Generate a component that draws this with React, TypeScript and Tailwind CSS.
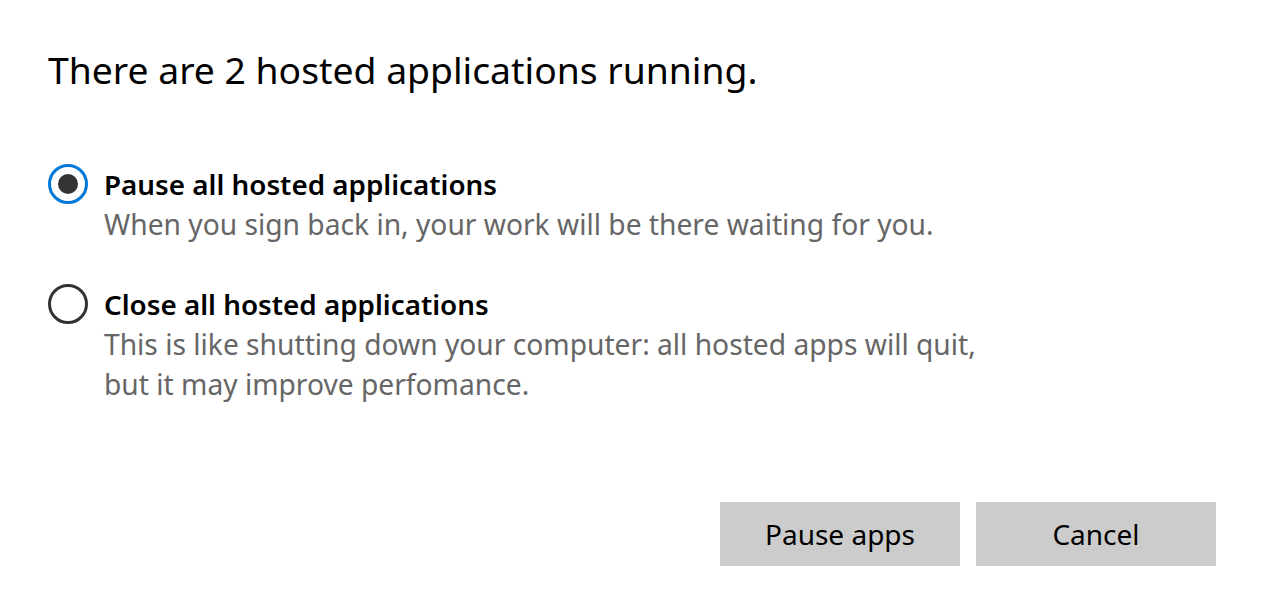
import React from "react";

export default function App() {
  return (
    <div
      className="w-[1264px] h-[614px] bg-white flex flex-col text-black"
      style={{ fontFamily: '"Noto Sans", "Open Sans", sans-serif' }}
    >
      <div className="pl-[48px] pt-[48px]">
        <h1 className="text-[37.3px] leading-[44px] font-normal">There are 2 hosted applications running.</h1>
      </div>
      <div className="pl-[48px] pt-[72px] flex flex-col gap-[40px]">
        <div className="flex items-start gap-[16px]">
          <div className="w-[40px] h-[40px] rounded-full border-[3px] border-[#0078d7] flex items-center justify-center">
            <div className="w-[20px] h-[20px] rounded-full bg-[#333333]" />
          </div>
          <div className="flex flex-col">
            <div className="text-[27.8px] leading-[40px] font-semibold">Pause all hosted applications</div>
            <div className="text-[28.2px] leading-[40px] text-[#666666]">When you sign back in, your work will be there waiting for you.</div>
          </div>
        </div>
        <div className="flex items-start gap-[16px]">
          <div className="w-[40px] h-[40px] rounded-full border-[3px] border-[#333333]" />
          <div className="flex flex-col">
            <div className="text-[27.8px] leading-[40px] font-semibold">Close all hosted applications</div>
            <div className="text-[28.2px] leading-[40px] text-[#666666]">
              This is like shutting down your computer: all hosted apps will quit,
              <br />
              but it may improve perfomance.
            </div>
          </div>
        </div>
      </div>
      <div className="flex-1" />
      <div className="flex justify-end gap-[16px] pr-[48px] pb-[48px]">
        <button className="w-[240px] h-[64px] bg-[#cccccc] text-[28px]">Pause apps</button>
        <button className="w-[240px] h-[64px] bg-[#cccccc] text-[28px]">Cancel</button>
      </div>
    </div>
  );
}
